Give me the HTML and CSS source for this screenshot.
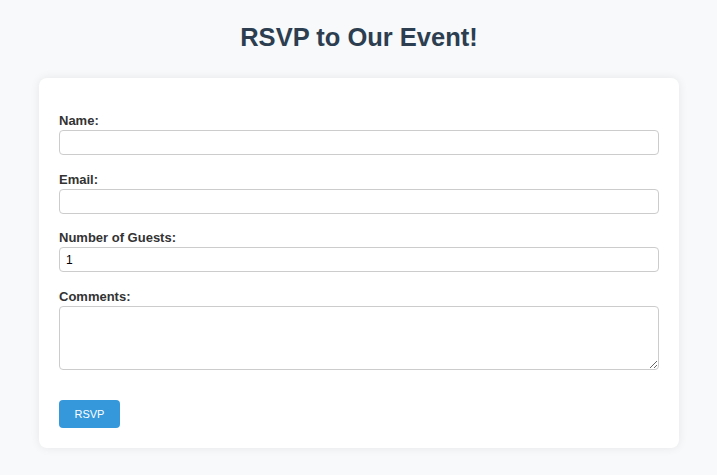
FILE: index.html
```html
<!DOCTYPE html>
<html lang="en">
<head>
<meta charset="UTF-8">
<title>RSVP</title>
<link rel="stylesheet" href="styles.css">
</head>
<body>
<h1 class="title">RSVP to Our Event!</h1>
<form class="card">
  <label class="label first" for="name">Name:</label>
  <input class="field" type="text" id="name">
  <label class="label" for="email">Email:</label>
  <input class="field" type="email" id="email">
  <label class="label" for="guests">Number of Guests:</label>
  <input class="field" type="number" id="guests" value="1">
  <label class="label" for="comments">Comments:</label>
  <textarea class="field area" id="comments"></textarea>
  <button class="btn" type="submit">RSVP</button>
</form>
</body>
</html>
```
FILE: styles.css
```css
body {
  margin: 0;
  padding: 20px 17px 20px 18px;
  background: #f7f9fa;
  font-family: "Liberation Sans", Arial, sans-serif;
}
.title {
  text-align: center;
  color: #2c3e50;
  font-size: 25.5px;
  line-height: 30px;
  margin: 2px 0 26px;
}
.card {
  max-width: 600px;
  margin: 0 auto;
  background: #fff;
  padding: 20px;
  border-radius: 8px;
  box-shadow: 0 0 10px rgba(0,0,0,0.08);
  display: flex;
  flex-direction: column;
}
.label {
  display: block;
  font-weight: bold;
  font-size: 13px;
  line-height: 15px;
  color: #333;
  margin-top: 16.5px;
  margin-bottom: 2px;
}
.label.first {
  margin-top: 15px;
}
.field {
  box-sizing: border-box;
  width: 100%;
  height: 25px;
  padding: 4px 6px;
  border: 1px solid #ccc;
  border-radius: 4px;
  font-family: "Liberation Sans", Arial, sans-serif;
  font-size: 12px;
  color: #000;
}
.area {
  height: 64px;
}
.btn {
  align-self: flex-start;
  margin-top: 30px;
  background: #3498db;
  color: #fff;
  border: none;
  border-radius: 4px;
  padding: 0 15.5px;
  font-family: "Liberation Sans", Arial, sans-serif;
  font-size: 11px;
  height: 28px;
}
```
